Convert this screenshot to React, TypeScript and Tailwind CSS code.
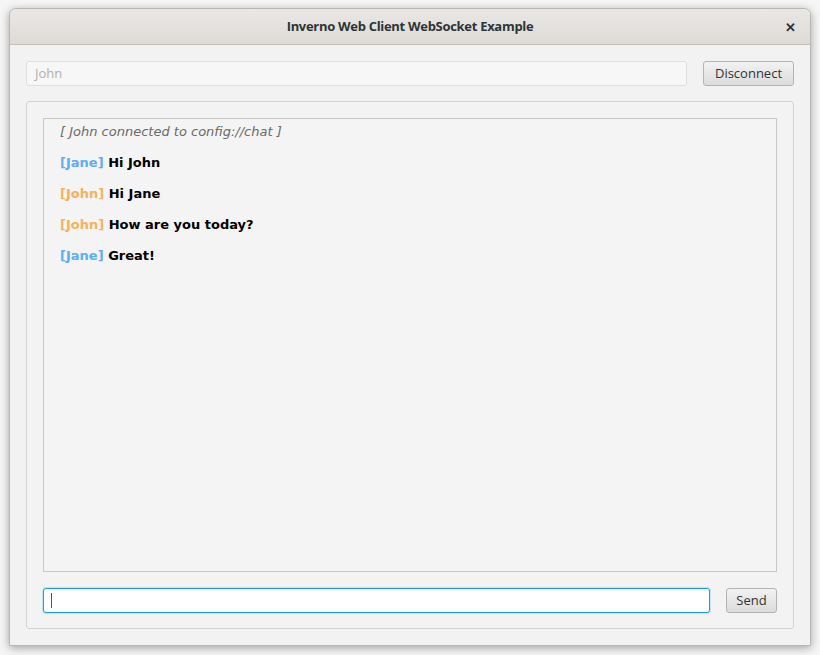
type Line = { who: string; text: string };

const lines: Line[] = [
    { who: "Jane", text: "Hi John" },
    { who: "John", text: "Hi Jane" },
    { who: "John", text: "How are you today?" },
    { who: "Jane", text: "Great!" },
];

const ui = { fontFamily: '"Open Sans", "Noto Sans", sans-serif' };
const chat = { fontFamily: '"DejaVu Sans", Verdana, sans-serif' };

function App() {
    return (
        <div className="w-[820px] h-[655px] bg-[#f6f6f6] pt-[8px] pl-[9px]" style={ui}>
            <div className="w-[802px] h-[638px] flex flex-col rounded-t-[7px] border border-[#b8b6b2] bg-[#f2f2f2] shadow-[0_2px_10px_rgba(0,0,0,0.35)] overflow-hidden">
                {/* title bar */}
                <div className="h-[36px] shrink-0 flex items-center justify-center relative bg-gradient-to-b from-[#e9e7e4] to-[#dedbd7] border-b border-[#c3c0bb]">
                    <span className="text-[13px] font-bold text-[#2e3436] tracking-[-0.3px]">Inverno Web Client WebSocket Example</span>
                    <span className="absolute right-[14px] top-[9px] text-[13px] font-bold text-[#2e3436]">✕</span>
                </div>

                <div className="flex-1 flex flex-col px-[16px] pt-[16px] pb-[16px]">
                    {/* name row */}
                    <div className="flex gap-[16px] h-[25px]">
                        <div className="flex-1 flex items-center px-[8px] rounded-[3px] border border-[#dedede] bg-[#f7f7f7] text-[13px] text-[#b0b0b0]">
                            John
                        </div>
                        <button className="w-[91px] rounded-[3px] border border-[#b4b4b4] bg-gradient-to-b from-[#f2f2f2] to-[#dcdcdc] text-[13px] text-[#333]">
                            Disconnect
                        </button>
                    </div>

                    {/* chat panel */}
                    <div className="flex-1 mt-[15px] flex flex-col rounded-[3px] border border-[#d3d3d3] bg-[#f3f3f3] px-[16px] pt-[16px] pb-[15px]">
                        <div className="flex-1 border border-[#c8c8c8] bg-[#f4f4f4] pl-[16px] pt-[4px]" style={chat}>
                            <div className="text-[13px] italic text-[#6a6a6a] leading-[18px]">[ John connected to config://chat ]</div>
                            {lines.map((l, i) => (
                                <div key={i} className="text-[13px] font-bold leading-[18px] mt-[13px] text-black">
                                    <span className={l.who === "Jane" ? "text-[#5eacf5]" : "text-[#f5b25c]"}>[{l.who}]</span> {l.text}
                                </div>
                            ))}
                        </div>

                        <div className="flex gap-[16px] h-[25px] mt-[16px]">
                            <div className="flex-1 flex items-center px-[7px] rounded-[3px] border border-[#1aa0d8] bg-white shadow-[0_0_0_1px_#bfe3f3]">
                                <div className="w-[1px] h-[15px] bg-[#555]" />
                            </div>
                            <button className="w-[51px] rounded-[3px] border border-[#b4b4b4] bg-gradient-to-b from-[#f2f2f2] to-[#dcdcdc] text-[13px] text-[#333]">
                                Send
                            </button>
                        </div>
                    </div>
                </div>
            </div>
        </div>
    );
}

export default App;
